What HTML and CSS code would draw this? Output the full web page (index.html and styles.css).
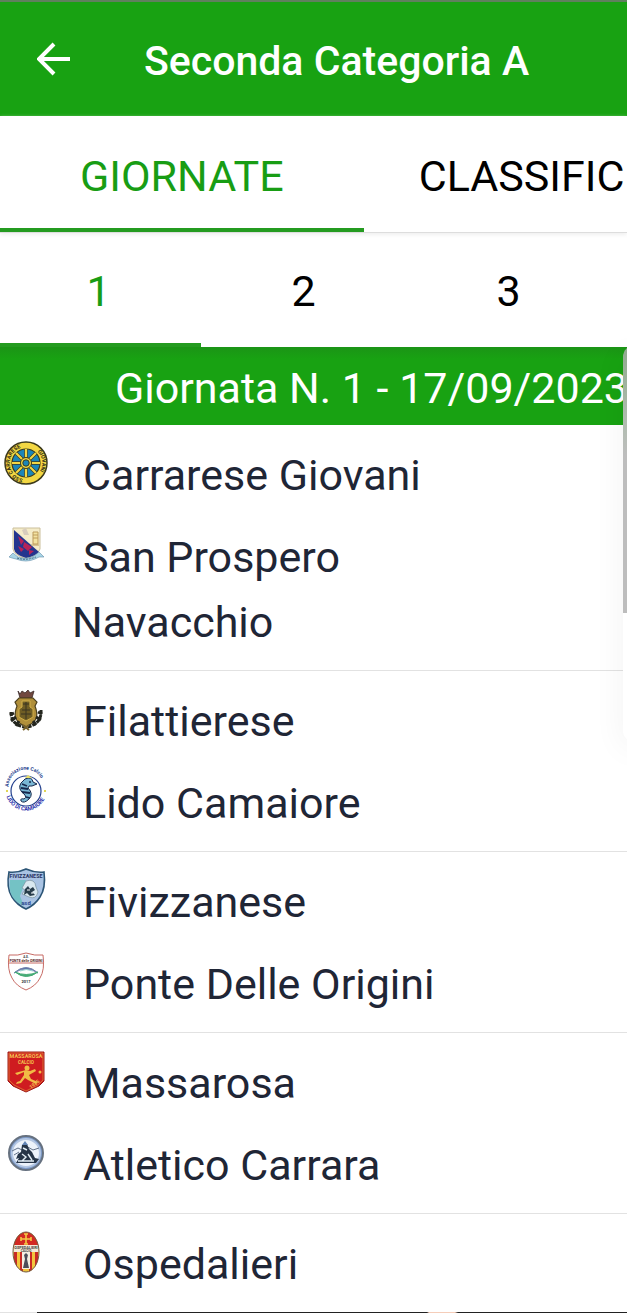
FILE: index.html
```html
<!DOCTYPE html>
<html lang="it">
<head>
    <meta charset="UTF-8">
    <meta name="viewport" content="width=device-width, initial-scale=1.0">
    <title>Seconda Categoria A</title>
    <link rel="stylesheet" href="styles.css">
</head>
<body>
    <header class="topbar">
        <a class="back" href="#" aria-label="Indietro">
            <svg viewBox="0 0 34 34" width="34" height="34"><path d="M33 17H3M17 2L2 17L17 32" fill="none" stroke="#fff" stroke-width="4"/></svg>
        </a>
        <h1>Seconda Categoria A</h1>
    </header>

    <nav class="tabs">
        <a class="tab active" href="#giornate">GIORNATE</a>
        <a class="tab next" href="#classifiche">CLASSIFIC</a>
    </nav>

    <nav class="days">
        <a class="day active" href="#g1">1</a>
        <a class="day" href="#g2">2</a>
        <a class="day" href="#g3">3</a>
    </nav>

    <main>
        <h2 class="round">Giornata N. 1 - 17/09/2023</h2>

        <section class="match">
            <div class="team">
                <svg class="badge" viewBox="0 0 44 44">
                    <circle cx="22" cy="21" r="21" fill="#f3d743" stroke="#3c3a1c" stroke-width="1.5"/>
                    <circle cx="22" cy="21" r="14" fill="#1c86b8" stroke="#3c3a1c" stroke-width="1.2"/>
                    <path d="M22 7V35M8 21H36M12 11L32 31M32 11L12 31" stroke="#3c3a1c" stroke-width="3.4"/>
                    <path d="M22 7V35M8 21H36M12 11L32 31M32 11L12 31" stroke="#f3d743" stroke-width="2.2"/>
                    <circle cx="22" cy="21" r="5.5" fill="#f3d743" stroke="#3c3a1c"/>
                    <circle cx="22" cy="21" r="3.2" fill="#1c86b8" stroke="#3c3a1c"/>
                    <path id="ring-left" d="M19 36.9A16.2 16.2 0 0 1 22 4.8A16.2 16.2 0 0 1 32 8.3" fill="none"/>
                    <path id="ring-right" d="M33.5 9.5A16.2 16.2 0 0 1 25 36.9" fill="none"/>
                    <text class="tiny" font-size="5.4" fill="#2c2a14"><textPath href="#ring-left">SSD CARRARESE</textPath></text>
                    <text class="tiny" font-size="5.4" fill="#2c2a14"><textPath href="#ring-right">GIOVANI</textPath></text>
                </svg>
                <span class="name">Carrarese Giovani</span>
            </div>
            <div class="team">
                <svg class="badge" viewBox="0 0 44 44">
                    <path d="M9 4H36V25Q34 31 22 35Q10 31 9 25Z" fill="#f5ecc9" stroke="#cbbf9b"/>
                    <path d="M10 6L35 28Q31 32 22 34Q11 31 10 25Z" fill="#24358e"/>
                    <path d="M14 12L20 17L17 21ZM20 18L28 23L24 27L19 23ZM14 22L20 25L17 28ZM25 26L30 27L25 31Z" fill="#b82358"/>
                    <path d="M18 6L22 4L25 11L20 11Z" fill="#d8cdbd"/>
                    <path d="M29 8H34V20H29ZM27 21H35M29 11H34M29 14H34" fill="#f3e2a0" stroke="#bd9c5c"/>
                    <path d="M5 33L9 29L14 33Q22 36 30 32L35 28L40 33L35 33L31 35Q22 39 12 35L8 34Z" fill="#a8d5e6" stroke="#638da9" stroke-width=".6"/>
                    <path d="M13 34Q22 37 32 33" fill="none" stroke="#40657f" stroke-dasharray="2 1"/>
                </svg>
                <span class="name">San Prospero Navacchio</span>
            </div>
        </section>

        <section class="match">
            <div class="team">
                <svg class="badge" viewBox="0 -2 44 44">
                    <path d="M14 1L16 4L18 1L21 3L24 0L26 3L30 1L28 8H16Z" fill="#71483f" stroke="#3a292a" stroke-width=".8"/>
                    <path d="M15 8H29L33 12L31 16Q36 29 27 34L22 37L17 34Q8 29 13 16L11 12Z" fill="#b08f3a" stroke="#4e421f" stroke-width="1.2"/>
                    <path d="M18 11H26V17L29 19V27L22 31L15 27V19L18 17Z" fill="#6f5d24" stroke="#d1af48"/>
                    <path d="M19 14H25M18 20H26M17 24H27M22 12V29" stroke="#3b3521"/>
                    <path d="M7 22Q7 35 21 37M37 20Q38 34 23 37" fill="none" stroke="#24261f" stroke-width="3" stroke-dasharray="4 1"/>
                    <path d="M6 25L10 23M7 31L12 27M12 36L15 31M38 24L34 22M37 30L32 27M32 35L29 31" stroke="#24261f" stroke-width="3"/>
                    <path d="M19 35L25 40M25 35L19 40" stroke="#76612b" stroke-width="2"/>
                </svg>
                <span class="name">Filattierese</span>
            </div>
            <div class="team">
                <svg class="badge" viewBox="0 0 44 44">
                    <circle cx="22" cy="21" r="15" fill="#fff" stroke="#23408d" stroke-width="1.2"/>
                    <path d="M21 9Q28 6 29 12L33 14L28 16Q24 15 24 18Q30 24 25 29Q20 34 17 31Q16 28 20 29Q23 28 21 25Q13 19 17 13Z" fill="#79b7d4" stroke="#17294d"/>
                    <path d="M18 14L23 16M17 18L24 19M18 22L26 23M22 27L26 28" stroke="#17294d" stroke-width="1.8"/>
                    <path d="M21 8L24 5L28 8" fill="#e5dc68"/>
                    <circle cx="26" cy="12" r="1" fill="#17294d"/>
                    <path d="M2 21H4M40 21H42" stroke="#e1d554" stroke-width="2"/>
                    <path id="lido-top" d="M4.5 17A17.5 17.5 0 0 1 39.5 17" fill="none"/>
                    <path id="lido-bottom" d="M2.5 26.5A20.5 20.5 0 0 0 41.5 26.5" fill="none"/>
                    <text class="tiny" font-size="5" fill="#23408d"><textPath href="#lido-top">Associazione Calcio</textPath></text>
                    <text class="tiny" font-size="5.6" fill="#1f2eaa"><textPath href="#lido-bottom">LIDO DI CAMAIORE</textPath></text>
                </svg>
                <span class="name">Lido Camaiore</span>
            </div>
        </section>

        <section class="match">
            <div class="team">
                <svg class="badge" viewBox="0 0 44 44">
                    <path d="M5 3Q14 4 22 0Q31 4 40 3Q42 19 36 28Q31 36 22 40Q13 36 8 28Q2 19 5 3Z" fill="#a9c3e3" stroke="#2c5576" stroke-width="1.6"/>
                    <path d="M6 11H22L16 27L20 37Q3 30 6 11Z" fill="#74c2c5"/>
                    <path d="M22 12Q31 9 32 18L34 23Q32 31 25 28L18 25L21 21L18 19Z" fill="#d9e8ef" stroke="#78909d" stroke-width=".7"/>
                    <path d="M21 20L24 17L26 20L29 18L31 21L28 23L31 26L26 27L23 24L20 26Z" fill="#283d4b"/>
                    <path d="M23 21H26M27 24H29" stroke="#fff"/>
                    <text class="tiny" x="22" y="9" font-size="5.4" text-anchor="middle" fill="#29335f">FIVIZZANESE</text>
                    <text class="tiny" x="22" y="36" font-size="6" text-anchor="middle" fill="#304c91">asd</text>
                </svg>
                <span class="name">Fivizzanese</span>
            </div>
            <div class="team">
                <svg class="badge" viewBox="0 0 44 44">
                    <path d="M5 4Q14 5 22 2Q31 5 39 4Q41 19 36 27Q32 35 22 39Q12 35 8 27Q3 19 5 4Z" fill="#fff" stroke="#c76b65"/>
                    <path d="M5 12H39" stroke="#c76b65"/>
                    <path d="M10 22Q22 11 34 22Q22 14 10 22Z" fill="#5269a3" stroke="#7384ae"/>
                    <path d="M11 21Q22 30 34 21Q22 26 11 21Z" fill="#44ab75" stroke="#44ab75"/>
                    <path d="M16 20Q22 17 29 20" fill="none" stroke="#9ad2d3"/>
                    <text class="tiny" x="22" y="7" font-size="3" text-anchor="middle" fill="#333">A.S.</text>
                    <text class="tiny" x="22" y="11" font-size="3.5" text-anchor="middle" fill="#522">PONTE delle ORIGINI</text>
                    <text class="tiny" x="22" y="32" font-size="4" text-anchor="middle" fill="#333">2017</text>
                </svg>
                <span class="name">Ponte Delle Origini</span>
            </div>
        </section>

        <section class="match">
            <div class="team">
                <svg class="badge" viewBox="0 0 44 44">
                    <path d="M4 2H40V31L35 36L22 42L9 36L4 31Z" fill="#cf1c20" stroke="#9d1819"/>
                    <path d="M5 3H39V30L34 35L22 41L10 35L5 30Z" fill="none" stroke="#df893a" stroke-width=".7"/>
                    <circle cx="23" cy="18" r="2.5" fill="#f1bb45"/>
                    <path d="M22 20L26 21L31 19L32 21L25 25L27 29L34 32L32 34L24 30L21 28L17 33L12 34L13 32L16 31L20 25L20 22L13 25L11 23Z" fill="#f1bb45"/>
                    <circle cx="36" cy="22" r="1.5" fill="#f1bb45"/>
                    <text class="tiny" x="22" y="8" font-size="5.4" text-anchor="middle" fill="#f4c251">MASSAROSA</text>
                    <text class="tiny" x="22" y="14" font-size="4.6" text-anchor="middle" fill="#f4c251">CALCIO</text>
                    <text class="tiny" transform="translate(27 39) rotate(-38)" font-size="5" fill="#f4c251">1925</text>
                </svg>
                <span class="name">Massarosa</span>
            </div>
            <div class="team">
                <svg class="badge" viewBox="0 0 44 44">
                    <circle cx="22" cy="21" r="17" fill="#7f9cca" stroke="#66717f" stroke-width="2"/>
                    <circle cx="22" cy="21" r="14" fill="#edf3fb" stroke="#b4c7e3" stroke-width="2"/>
                    <path d="M8 19L14 16L18 18L22 14L29 18L35 16M10 23L15 20" fill="none" stroke="#62728a"/>
                    <path d="M18 13L23 12L25 17L28 20L31 26L35 27L32 31H12L15 26L12 27L14 22L17 20Z" fill="#263548"/>
                    <path d="M19 16L23 18M18 22L22 25L18 29M24 22L28 28M14 29H30" stroke="#e2edf5" stroke-width="1.4" fill="none"/>
                    <path d="M18 13L21 9L24 13" fill="#6184b5"/>
                </svg>
                <span class="name">Atletico Carrara</span>
            </div>
        </section>

        <section class="match">
            <div class="team">
                <svg class="badge" viewBox="0 0 44 44">
                    <clipPath id="oval"><ellipse cx="22" cy="21" rx="13" ry="20"/></clipPath>
                    <g clip-path="url(#oval)">
                        <path d="M8 0H36V42H8Z" fill="#f2c63d"/>
                        <path d="M8 0H36V15H8Z" fill="#d32922"/>
                        <path d="M10 18H13V42H10ZM16 18H19V42H16ZM25 18H28V42H25ZM31 18H34V42H31Z" fill="#c92a25"/>
                        <path d="M8 14H36V21H8Z" fill="#f5ead7"/>
                        <path d="M18 20H26V38H18Z" fill="#f4eee1"/>
                        <path d="M20 24L22 22L24 24L23 28L25 37H19L21 28Z" fill="#4c4d59"/>
                    </g>
                    <path d="M22 3V13M17 8H27M20 3H24M20 13H24M17 6V10M27 6V10" stroke="#f4c944" stroke-width="1.6"/>
                    <ellipse cx="22" cy="21" rx="13" ry="20" fill="none" stroke="#735b42"/>
                    <text class="tiny" x="22" y="18" font-size="3.8" text-anchor="middle" fill="#444">OSPEDALIERI</text>
                    <text class="tiny" x="22" y="21" font-size="3" text-anchor="middle" fill="#444">CALCIO</text>
                </svg>
                <span class="name">Ospedalieri</span>
            </div>
        </section>
    </main>

    <div class="edge-panel"></div>
    <footer class="bottom-line"></footer>
</body>
</html>
```
FILE: styles.css
```css
*{
    margin: 0;
    padding: 0;
    box-sizing: border-box;
}
body{
    position: relative;
    height: 100vh;
    overflow: hidden;
    background-color: #fff;
    color: #1f2636;
    font-family: Roboto, "Liberation Sans", sans-serif;
    font-size: 43px;
}
a{
    color: inherit;
    text-decoration: none;
}

.topbar{
    display: flex;
    align-items: center;
    gap: 73px;
    height: 116px;
    padding-left: 37px;
    border-top: 2px solid #60805e;
    background-color: #18a212;
    color: #fff;
}
.topbar h1{
    padding-top: 3px;
    font-size: 41px;
    font-weight: 500;
    line-height: 50px;
    white-space: nowrap;
}
.back{
    display: flex;
}

.tabs{
    display: flex;
    height: 117px;
    overflow: hidden;
    border-bottom: 1px solid #ddd;
    box-shadow: 0 2px 4px #f0f0f0;
    color: #000;
}
.tab{
    flex: 0 0 58%;
    padding-top: 4px;
    line-height: 112px;
    text-align: center;
}
.tab.next{
    flex: 1;
    padding-left: 55px;
    text-align: left;
}
.days{
    display: flex;
    height: 114px;
    margin-left: -4px;
    color: #000;
}
.day{
    flex: 0 0 32.5%;
    padding-top: 4px;
    line-height: 108px;
    text-align: center;
}
.active{
    border-bottom: 4px solid #249b20;
    color: #189d14;
}

.round{
    height: 78px;
    padding-left: 115px;
    overflow: hidden;
    background: linear-gradient(#1b9416, #18a212 12px);
    color: #fff;
    font-size: 43px;
    font-weight: 400;
    line-height: 82px;
    white-space: nowrap;
}

.match{
    display: flex;
    flex-direction: column;
    gap: 16px;
    padding: 17px 0 15px;
    border-bottom: 1px solid #e2e2e2;
}
.team{
    display: grid;
    grid-template-columns: 68px 1fr;
    padding-left: 4px;
    padding-right: 120px;
}
.badge{
    width: 44px;
    height: 44px;
    overflow: visible;
}
.name{
    padding-top: 1px;
    line-height: 65px;
    text-indent: 11px;
}
.tiny{
    font-family: Roboto, sans-serif;
    font-weight: 700;
}

/* drawer handle peeking in from the right side */
.edge-panel{
    position: absolute;
    top: 345px;
    right: -20px;
    width: 24px;
    height: 397px;
    border-radius: 16px;
    background: linear-gradient(#8fa98d, #b2bdb1 80px, #bdbdbd 110px, #bdbdbd 268px, #fff 268px);
    box-shadow: 0 8px 32px rgba(0, 0, 0, 0.06);
}
.bottom-line{
    position: absolute;
    left: 37px;
    right: 0;
    bottom: 0;
    height: 1px;
    background: linear-gradient(90deg, #222 390px, #f5cdb9 392px, #f5cdb9 418px, #222 421px);
}
```
